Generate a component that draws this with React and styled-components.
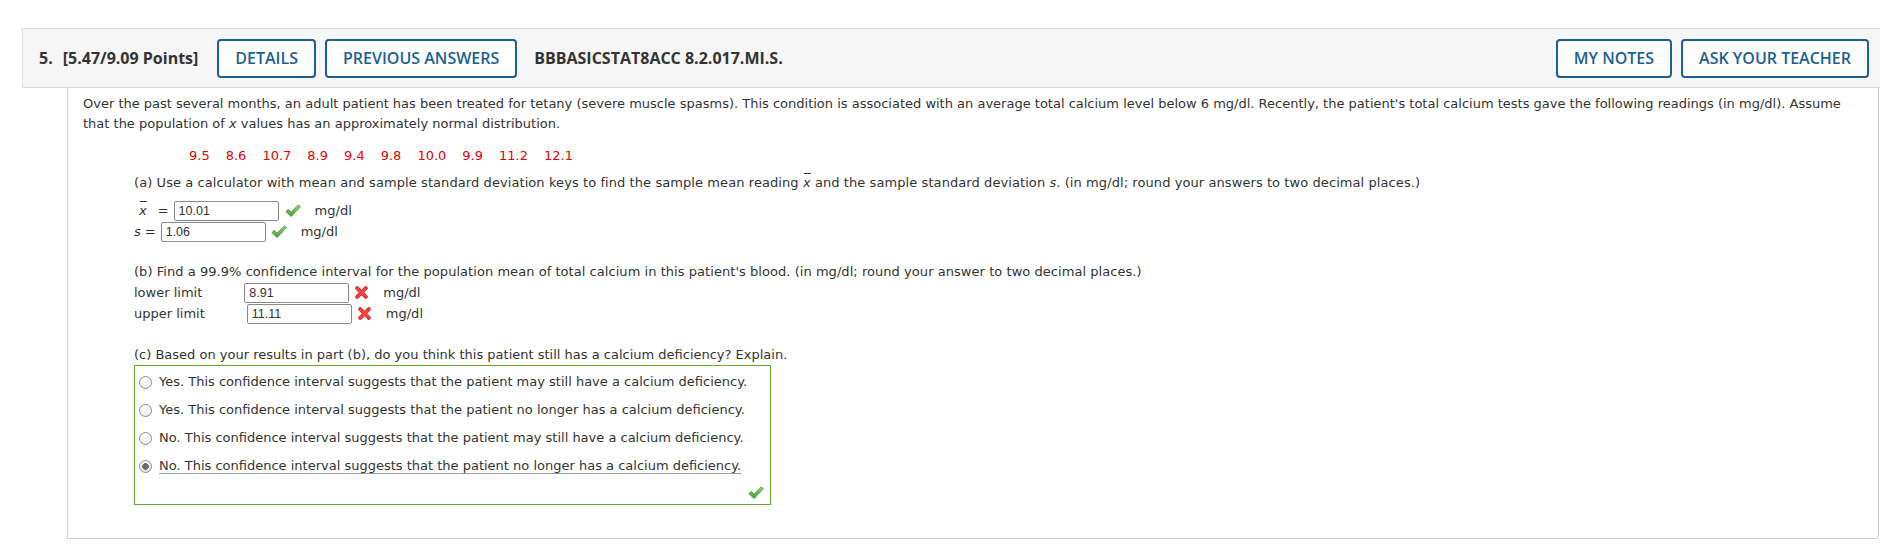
import React from 'react';
import styled, { createGlobalStyle } from 'styled-components';

const Global = createGlobalStyle`
  html, body { margin: 0; padding: 0; background: #fff; overflow: hidden; }
  body { font-family: "DejaVu Sans", Verdana, sans-serif; }
`;

const Page = styled.div`
  width: 1860px;
  padding: 28px 0 0 22px;
`;

const Header = styled.div`
  display: flex;
  align-items: center;
  height: 58px;
  padding: 0 12px 0 16px;
  background: #f6f6f6;
  border: 1px solid #dcdcdc;
  font-family: "Open Sans", sans-serif;
  color: #333;
`;

const Title = styled.span`
  font-size: 16px;
  font-weight: 700;
  white-space: nowrap;
  margin-right: ${p => p.$mr || 0}px;
`;

const HeaderButton = styled.button`
  height: 39px;
  padding: 0 16px;
  border: 2px solid #1d5f91;
  border-radius: 4px;
  background: #fff;
  color: #1d5f91;
  font-family: "Open Sans", sans-serif;
  font-size: 16px;
  font-weight: 600;
  white-space: nowrap;
  margin-right: ${p => p.$mr || 0}px;
  cursor: pointer;
`;

const Spacer = styled.div`
  flex: 1;
`;

const Panel = styled.div`
  margin: 0 3px 0 45px;
  border: 1px solid #cfcfcf;
  border-top: none;
  border-radius: 0 0 4px 0;
  padding: 6px 16px 33px 15px;
  font-size: 13px;
  line-height: 20px;
  color: #333;
`;

const Para = styled.p`
  margin: 0;
`;

const Part = styled.div`
  margin-left: 51px;
`;

const DataRow = styled.div`
  display: flex;
  gap: 16px;
  margin: 12px 0 0 55px;
  color: #e60000;
  height: 20px;
`;

const Prompt = styled.div`
  margin-top: ${p => p.$mt || 0}px;
  height: 20px;
  white-space: nowrap;
  letter-spacing: ${p => p.$ls || 0}px;
`;

const Var = styled.span`
  font-style: italic;
  position: relative;
  ${p => p.$bar && `
    &::before {
      content: '';
      position: absolute;
      left: 1px;
      right: 0;
      top: -2px;
      border-top: 1px solid #333;
    }
  `}
`;

const AnswerRow = styled.div`
  display: flex;
  align-items: center;
  height: 21px;
  margin-top: ${p => p.$mt || 0}px;
  white-space: nowrap;
`;

const Label = styled.span`
  margin-left: ${p => p.$ml || 0}px;
  margin-right: ${p => p.$mr || 0}px;
`;

const Answer = styled.input`
  box-sizing: border-box;
  width: ${p => p.$w || 105}px;
  height: 20px;
  margin: 0 ${p => p.$gap || 6}px 0 0;
  padding: 0 4px;
  border: 1px solid #8a8a8a;
  border-radius: 2px;
  font-family: "Liberation Sans", Arial, sans-serif;
  font-size: 12.5px;
  color: #333;
  background: #fff;
  outline: none;
`;

const Unit = styled.span`
  margin-left: ${p => p.$ml || 14}px;
`;

const Choices = styled.div`
  width: 635px;
  border: 1px solid #66aa33;
  padding: 2px 0 4px 0;
`;

const Choice = styled.label`
  display: flex;
  align-items: center;
  height: 28px;
  white-space: nowrap;
`;

const RadioDot = styled.input.attrs({ type: 'radio' })`
  appearance: none;
  -webkit-appearance: none;
  box-sizing: border-box;
  width: 13px;
  height: 13px;
  margin: 0 7px 0 4px;
  border-radius: 50%;
  border: 1px solid #8a8a8a;
  background: ${p => (p.checked
    ? 'radial-gradient(circle, #6a6a6a 0 3px, transparent 3.6px), linear-gradient(#fdfdfd, #e4e4e4)'
    : 'linear-gradient(#ffffff, #ececec)')};
`;

const ChoiceText = styled.span`
  ${p => p.$picked && `
    text-decoration: underline;
    text-decoration-color: #999;
    text-underline-offset: 3px;
  `}
`;

const Verdict = styled.div`
  display: flex;
  justify-content: flex-end;
  margin-top: 6px;
  padding-right: 6px;
  height: 14px;
`;

const CheckIcon = () => (
  <svg width="16" height="14" viewBox="0 0 16 14">
    <defs>
      <linearGradient id="chk" x1="0" y1="0" x2="0" y2="1">
        <stop offset="0" stopColor="#9adb78" />
        <stop offset="1" stopColor="#3f9a32" />
      </linearGradient>
    </defs>
    <path
      d="M0.8 7.6 L3.2 5.3 L6.1 8.1 L13.4 0.8 L15.4 2.8 L6.1 12.6 Z"
      fill="url(#chk)"
      stroke="#3d8a2e"
      strokeWidth="0.7"
      strokeLinejoin="round"
    />
  </svg>
);

const CrossIcon = () => (
  <svg width="13" height="13" viewBox="0 0 13 13">
    <path d="M2.2 2.2 L10.8 10.8 M10.8 2.2 L2.2 10.8" stroke="#c92a2a" strokeWidth="4" strokeLinecap="round" />
    <path d="M2.2 2.2 L10.8 10.8 M10.8 2.2 L2.2 10.8" stroke="#ee4444" strokeWidth="2.8" strokeLinecap="round" />
  </svg>
);

const readings = ['9.5', '8.6', '10.7', '8.9', '9.4', '9.8', '10.0', '9.9', '11.2', '12.1'];

const choices = [
  'Yes. This confidence interval suggests that the patient may still have a calcium deficiency.',
  'Yes. This confidence interval suggests that the patient no longer has a calcium deficiency.',
  'No. This confidence interval suggests that the patient may still have a calcium deficiency.',
  'No. This confidence interval suggests that the patient no longer has a calcium deficiency.',
];

export default function App() {
  return (
    <>
      <Global />
      <Page>
        <Header>
          <Title $mr={10}>5.</Title>
          <Title $mr={19}>[5.47/9.09 Points]</Title>
          <HeaderButton $mr={9}>DETAILS</HeaderButton>
          <HeaderButton $mr={17}>PREVIOUS ANSWERS</HeaderButton>
          <Title>BBBASICSTAT8ACC 8.2.017.MI.S.</Title>
          <Spacer />
          <HeaderButton $mr={9}>MY NOTES</HeaderButton>
          <HeaderButton>ASK YOUR TEACHER</HeaderButton>
        </Header>
        <Panel>
          <Para>
            Over the past several months, an adult patient has been treated for tetany (severe muscle spasms). This
            condition is associated with an average total calcium level below 6 mg/dl. Recently, the patient's total
            calcium tests gave the following readings (in mg/dl). Assume that the population of <Var>x</Var> values has
            an approximately normal distribution.
          </Para>
          <Part>
            <DataRow>
              {readings.map((r, i) => (
                <span key={i}>{r}</span>
              ))}
            </DataRow>
            <Prompt $mt={7} $ls={0.08}>
              (a) Use a calculator with mean and sample standard deviation keys to find the sample mean reading{' '}
              <Var $bar>x</Var> and the sample standard deviation <Var>s</Var>. (in mg/dl; round your answers to two
              decimal places.)
            </Prompt>
            <AnswerRow $mt={7}>
              <Label $ml={5}>
                <Var $bar>x</Var>
              </Label>
              <Label $ml={11} $mr={5}>=</Label>
              <Answer readOnly value="10.01" $gap={6} />
              <CheckIcon />
              <Unit>mg/dl</Unit>
            </AnswerRow>
            <AnswerRow>
              <Label>
                <Var>s</Var>
              </Label>
              <Label $ml={4} $mr={5}>=</Label>
              <Answer readOnly value="1.06" $gap={5} />
              <CheckIcon />
              <Unit>mg/dl</Unit>
            </AnswerRow>
            <Prompt $mt={20} $ls={0.05}>
              (b) Find a 99.9% confidence interval for the population mean of total calcium in this patient's blood. (in
              mg/dl; round your answer to two decimal places.)
            </Prompt>
            <AnswerRow>
              <Label $mr={42}>lower limit</Label>
              <Answer readOnly value="8.91" $gap={6} />
              <CrossIcon />
              <Unit $ml={15}>mg/dl</Unit>
            </AnswerRow>
            <AnswerRow>
              <Label $mr={42}>upper limit</Label>
              <Answer readOnly value="11.11" $gap={6} />
              <CrossIcon />
              <Unit $ml={15}>mg/dl</Unit>
            </AnswerRow>
            <Prompt $mt={21}>
              (c) Based on your results in part (b), do you think this patient still has a calcium deficiency? Explain.
            </Prompt>
            <Choices>
              {choices.map((c, i) => (
                <Choice key={i}>
                  <RadioDot name="q5c" checked={i === 3} readOnly />
                  <ChoiceText $picked={i === 3}>{c}</ChoiceText>
                </Choice>
              ))}
              <Verdict>
                <CheckIcon />
              </Verdict>
            </Choices>
          </Part>
        </Panel>
      </Page>
    </>
  );
}
